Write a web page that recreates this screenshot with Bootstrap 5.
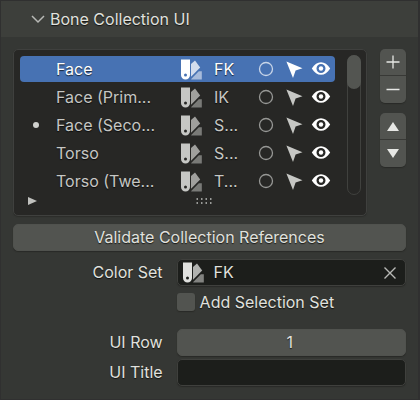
<!DOCTYPE html>
<html lang="en" data-bs-theme="dark">
<head>
<meta charset="utf-8">
<meta name="viewport" content="width=device-width, initial-scale=1">
<title>Bone Collection UI</title>
<link href="https://cdn.jsdelivr.net/npm/bootstrap@5.3.0/dist/css/bootstrap.min.css" rel="stylesheet">
<style>
  body { background: #303030; color: #e0e1de; font: 16px/26px Inter, "Liberation Sans", sans-serif; text-shadow: 0 1px 1px rgba(0,0,0,.7); }
  button, input { font: inherit; color: inherit; text-shadow: inherit; }
  button { background: none; border: 0; padding: 0; }
  svg { display: block; flex: none; }
  .panel { background: #353734; margin: 1px 2px 0 1px; min-height: calc(100vh - 2px); }
  .panel-head { background: #3d3f3b; height: 36px; padding-left: 30px; gap: 5px; }
  .panel-body { padding: 12px; }
  .list-box { background: #272725; border: 1px solid #3f403e; border-radius: 5px; padding: 5px 5px 8px 6px; box-shadow: 0 1px 1px #2c2d2a; }
  .rows { gap: 2px; padding-top: 1px; }
  .item { height: 26px; border-radius: 4px; padding-right: 2px; color: #c6c7c4; }
  .item.selected { background: #4772b3; color: #fff; }
  .bullet { width: 32px; }
  .bullet i { width: 6px; height: 6px; border-radius: 50%; background: #d0d1ce; }
  .item-name { padding-left: 4px; text-align: left; }
  .swatch { width: 21px; height: 21px; }
  .item-set { width: 37px; margin-left: 12px; text-align: left; }
  .toggle { width: 29px; }
  .toggle.eye { width: 24px; color: #fff; }
  .scroll-track { width: 14px; height: 140px; margin-left: 12px; border: 1px solid #40413e; border-radius: 7px; }
  .scroll-thumb { height: 34px; border-radius: 7px; background: #535551; margin: -1px; }
  .list-foot { height: 12px; padding-left: 8px; gap: 8px; color: #c0c1be; }
  .side { width: 26px; margin-left: 13px; gap: 10px; }
  .stack { border-radius: 5px; box-shadow: 0 1px 1px #292a27; }
  .stack button { background: #525450; height: 27px; }
  .stack button:first-child { border-radius: 5px 5px 0 0; border-bottom: 1px solid #383936; }
  .stack button:last-child { border-radius: 0 0 5px 5px; }
  .field, .wide { height: 27px; border-radius: 5px; border: 1px solid #3f403d; box-shadow: 0 1px 1px #292a27; }
  .field { background: #1c1e1b; padding: 0 8px 0 5px; }
  .wide, .field.number { background: #525450; border-color: #50524e; }
  .wide { line-height: 24px; }
  .field input { background: none; border: 0; outline: 0; padding: 0; min-width: 0; line-height: 25px; }
  .field .swatch { margin-right: 10px; }
  .form-area { display: grid; grid-template-columns: minmax(0, 150fr) minmax(0, 230fr); column-gap: 14px; margin-top: 3px; }
  .form-area.spaced { margin-top: 14px; }
  .form-area > label { text-align: right; }
  .tick-row { gap: 5px; }
  .tick { appearance: none; width: 18px; height: 18px; border-radius: 3px; background: #525450; box-shadow: 0 1px 1px #292a27; }
</style>
<script src="https://cdn.jsdelivr.net/npm/bootstrap@5.3.0/dist/js/bootstrap.bundle.min.js"></script>
</head>
<body>
<svg width="0" height="0" class="position-absolute" aria-hidden="true">
  <symbol id="i-swatch" viewBox="0 0 21 21">
    <path fill="currentColor" fill-rule="evenodd" d="M0 .4h9V16a4.500 4.500 0 0 1-9 0zM4.500 14.500a1.500 1.500 0 1 0 0 3a1.500 1.500 0 0 0 0-3z"/>
    <path fill="currentColor" opacity=".76" d="M10 5L14 1.500L19.200 8.500L10 17.800z"/>
    <path fill="currentColor" opacity=".52" d="M20.800 12.200v8.200H10.200V20L17.800 12.200z"/>
  </symbol>
  <symbol id="i-ring" viewBox="0 0 16 16"><circle cx="8" cy="8" r="6.500" fill="none" stroke="currentColor" stroke-width="1.300" opacity=".7"/></symbol>
  <symbol id="i-cursor" viewBox="0 0 17 17"><path fill="currentColor" d="M.4.6L16.500 7.300L9.600 9.500L7 16.900z"/></symbol>
  <symbol id="i-eye" viewBox="0 0 20 14">
    <path fill="currentColor" fill-rule="evenodd" d="M.8 6.500C3.500 2.300 6.500.3 10 .3S16.500 2.300 19.200 6.500C16.500 10.800 13.500 12.800 10 12.800S3.500 10.800.8 6.500zM10 2a4.500 4.500 0 1 0 0 9a4.500 4.500 0 0 0 0-9z"/>
    <circle cx="10" cy="6.500" r="2.200" fill="currentColor"/>
  </symbol>
</svg>

<main class="panel">
  <button class="panel-head d-flex align-items-center w-100" type="button" aria-expanded="true">
    <svg width="14" height="10" viewBox="0 0 14 10"><path d="M1 2l6 6 6-6" fill="none" stroke="#b8b9b6" stroke-width="1.500"/></svg>
    <span>Bone Collection UI</span>
  </button>
  <div class="panel-body">
    <div class="d-flex align-items-start">
      <section class="list-box flex-grow-1">
        <div class="d-flex align-items-start">
          <div class="rows d-flex flex-column flex-grow-1" id="rows"></div>
          <div class="scroll-track"><div class="scroll-thumb"></div></div>
        </div>
        <div class="list-foot d-flex align-items-center">
          <button type="button" aria-label="Filter"><svg width="10" height="10" viewBox="0 0 10 10"><path d="M0 1l9 4-9 4z" fill="currentColor"/></svg></button>
          <div class="flex-grow-1 d-flex justify-content-center">
            <svg width="16" height="6" viewBox="0 0 16 6"><path d="M.5 1h15M.5 5h15" stroke="currentColor" stroke-width="1.500" stroke-dasharray="1.500 3"/></svg>
          </div>
        </div>
      </section>
      <div class="side d-flex flex-column">
        <div class="stack d-flex flex-column">
          <button type="button" class="d-flex align-items-center justify-content-center" aria-label="Add"><svg width="14" height="14" viewBox="0 0 14 14"><path d="M7 .5v13M.5 7h13" stroke="#e6e7e4" stroke-width="1.300"/></svg></button>
          <button type="button" class="d-flex align-items-center justify-content-center" aria-label="Remove"><svg width="14" height="14" viewBox="0 0 14 14"><path d="M.5 6.500h13" stroke="#e6e7e4" stroke-width="1.500"/></svg></button>
        </div>
        <div class="stack d-flex flex-column">
          <button type="button" class="d-flex align-items-center justify-content-center" aria-label="Move up"><svg width="12" height="9" viewBox="0 0 12 9"><path d="M6 0l6 9H0z" fill="#e6e7e4"/></svg></button>
          <button type="button" class="d-flex align-items-center justify-content-center" aria-label="Move down"><svg width="12" height="9" viewBox="0 0 12 9"><path d="M6 9L0 0h12z" fill="#e6e7e4"/></svg></button>
        </div>
      </div>
    </div>

    <button type="button" class="wide w-100 mt-2 d-flex align-items-start justify-content-center">Validate Collection References</button>

    <div class="form-area mt-2">
      <label for="color-set">Color Set</label>
      <div class="field d-flex align-items-center">
        <svg class="swatch"><use href="#i-swatch"/></svg>
        <input id="color-set" class="flex-grow-1" type="text" value="FK">
        <button type="button" aria-label="Clear"><svg width="14" height="14" viewBox="0 0 14 14"><path d="M1.500 1.500l11 11m0-11l-11 11" stroke="#b8b9b6" stroke-width="1.400"/></svg></button>
      </div>
    </div>
    <div class="form-area">
      <span></span>
      <div class="tick-row d-flex align-items-center">
        <input class="tick m-0" type="checkbox" id="add-set"><label for="add-set">Add Selection Set</label>
      </div>
    </div>
    <div class="form-area spaced">
      <label for="ui-row">UI Row</label>
      <div class="field number d-flex"><input id="ui-row" class="w-100 text-center" type="text" inputmode="numeric" value="1"></div>
    </div>
    <div class="form-area">
      <label for="ui-title">UI Title</label>
      <div class="field d-flex"><input id="ui-title" class="w-100" type="text"></div>
    </div>
  </div>
</main>
<script>
  const items = [
    ["Face", "FK"], ["Face (Prim...", "IK"], ["Face (Seco...", "S...", true],
    ["Torso", "S..."], ["Torso (Twe...", "T..."]
  ];
  document.getElementById("rows").innerHTML = items.map(([name, set, dot], i) => `
    <div class="item d-flex align-items-center ${i ? "" : "selected"}">
      <span class="bullet d-flex justify-content-center">${dot ? "<i></i>" : ""}</span>
      <button type="button" class="item-name flex-grow-1">${name}</button>
      <svg class="swatch"><use href="#i-swatch"/></svg>
      <button type="button" class="item-set">${set}</button>
      <button type="button" class="toggle d-flex justify-content-center" aria-label="Solo"><svg width="16" height="16"><use href="#i-ring"/></svg></button>
      <button type="button" class="toggle d-flex justify-content-center" aria-label="Selectable"><svg width="17" height="17"><use href="#i-cursor"/></svg></button>
      <button type="button" class="toggle eye d-flex justify-content-center" aria-label="Visible"><svg width="20" height="14"><use href="#i-eye"/></svg></button>
    </div>`).join("");
</script>
</body>
</html>
